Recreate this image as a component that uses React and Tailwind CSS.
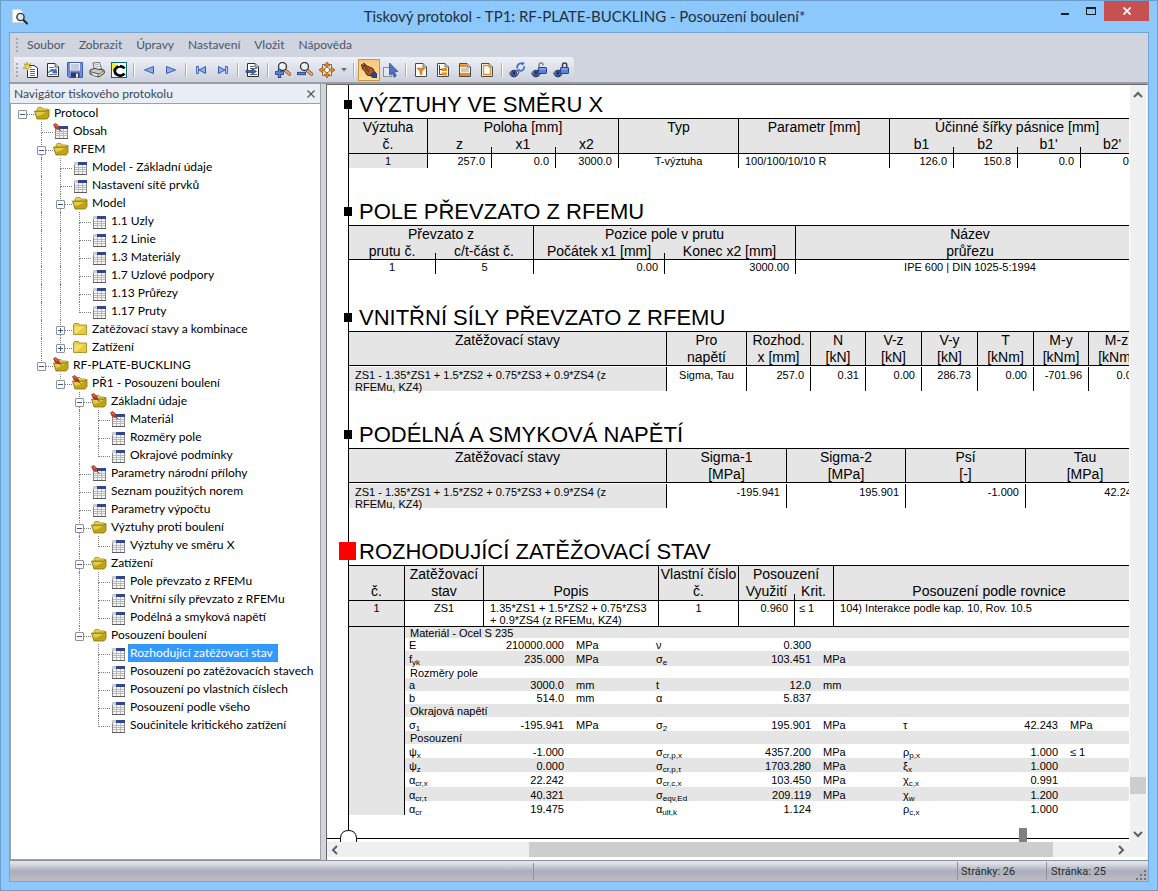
import React, { useState } from 'react';

const MENU_ITEMS = ['Soubor', 'Zobrazit', 'Úpravy', 'Nastavení', 'Vložit', 'Nápověda'];

const TREE = {
  label: 'Protocol',
  icon: 'open',
  children: [
    { label: 'Obsah', icon: 'table', pinned: true },
    {
      label: 'RFEM',
      icon: 'open',
      children: [
        { label: 'Model - Základní údaje', icon: 'table' },
        { label: 'Nastavení sítě prvků', icon: 'table' },
        {
          label: 'Model',
          icon: 'open',
          children: [
            { label: '1.1 Uzly', icon: 'table' },
            { label: '1.2 Linie', icon: 'table' },
            { label: '1.3 Materiály', icon: 'table' },
            { label: '1.7 Uzlové podpory', icon: 'table' },
            { label: '1.13 Průřezy', icon: 'table' },
            { label: '1.17 Pruty', icon: 'table' },
          ],
        },
        { label: 'Zatěžovací stavy a kombinace', icon: 'closed', collapsed: true },
        { label: 'Zatížení', icon: 'closed', collapsed: true },
      ],
    },
    {
      label: 'RF-PLATE-BUCKLING',
      icon: 'open',
      pinned: true,
      children: [
        {
          label: 'PŘ1 - Posouzení boulení',
          icon: 'open',
          pinned: true,
          children: [
            {
              label: 'Základní údaje',
              icon: 'open',
              pinned: true,
              children: [
                { label: 'Materiál', icon: 'table', pinned: true },
                { label: 'Rozměry pole', icon: 'table' },
                { label: 'Okrajové podmínky', icon: 'table' },
              ],
            },
            { label: 'Parametry národní přílohy', icon: 'table', pinned: true },
            { label: 'Seznam použitých norem', icon: 'table' },
            { label: 'Parametry výpočtu', icon: 'table' },
            {
              label: 'Výztuhy proti boulení',
              icon: 'open',
              children: [{ label: 'Výztuhy ve směru X', icon: 'table' }],
            },
            {
              label: 'Zatížení',
              icon: 'open',
              children: [
                { label: 'Pole převzato z RFEMu', icon: 'table' },
                { label: 'Vnitřní síly převzato z RFEMu', icon: 'table' },
                { label: 'Podélná a smyková napětí', icon: 'table' },
              ],
            },
            {
              label: 'Posouzení boulení',
              icon: 'open',
              children: [
                { label: 'Rozhodující zatěžovací stav', icon: 'table' },
                { label: 'Posouzení po zatěžovacích stavech', icon: 'table' },
                { label: 'Posouzení po vlastních číslech', icon: 'table' },
                { label: 'Posouzení podle všeho', icon: 'table' },
                { label: 'Součinitele kritického zatížení', icon: 'table' },
              ],
            },
          ],
        },
      ],
    },
  ],
};

/* ---------- icons ---------- */

const Svg = ({ children, className = 'size-4' }) => (
  <svg viewBox="0 0 16 16" className={`block shrink-0 ${className}`} aria-hidden="true">
    {children}
  </svg>
);

const Pin = () => (
  <g>
    <path d="M0.5 1.5 L3 0.5 L5.5 3 L7 6 L4 6.5 L2 5Z" fill="#c0392b" stroke="#7a2a20" strokeWidth="0.6" />
    <path d="M2 1.5 L4 3.5" stroke="#f2b8a8" strokeWidth="1" />
    <path d="M6 6 L8.5 8.5" stroke="#5a3a20" strokeWidth="1" />
  </g>
);

const TreeIcon = ({ type, pinned }) => (
  <Svg>
    {type === 'table' && (
      <>
        <rect x="2" y="3" width="13" height="13" fill="#8a8a8e" />
        <rect x="2" y="3" width="4" height="3" fill="#c9cbd4" />
        <rect x="6" y="3" width="9" height="3" fill="#31468c" />
        <rect x="3" y="6" width="11" height="9" fill="#f6f6f4" />
        <path d="M3 8.5H14 M3 10.5H14 M3 12.5H14 M6.5 6V15 M10.5 6V15" stroke="#b9b9bc" strokeWidth="1" />
        <path d="M2 15.5H15" stroke="#5c5c60" />
      </>
    )}
    {type === 'open' && (
      <>
        <path d="M3 4 L4 2.5 H8 L9 4 H13.5 V12 H4Z" fill="#e6cd45" stroke="#a8901c" strokeWidth="0.8" />
        <path d="M0.5 6 H12.5 L15 4.5 V11.5 L13 14 H3Z" fill="#bfa418" stroke="#857010" strokeWidth="0.8" />
        <path d="M1.5 7 H12 L7 10 L3 11Z" fill="#ecd85c" opacity="0.75" />
      </>
    )}
    {type === 'closed' && (
      <>
        <path d="M1.5 4 L2.5 2.5 H6.5 L7.5 4 H14.5 V13.5 H1.5Z" fill="#e6ca3c" stroke="#a8901c" strokeWidth="0.9" />
        <path d="M2.5 5.5 H12.5 L4.5 12.5 H2.5Z" fill="#f3e070" />
      </>
    )}
    {pinned && <Pin />}
  </Svg>
);

const Sheet = ({ stroke = '#2e2e2e' }) => (
  <>
    <path d="M2.5 1.5 H10 L13.5 5 V14.5 H2.5Z" fill="#fdfdfd" stroke={stroke} />
    <path d="M10 1.5 V5 H13.5" fill="#d8dbe2" stroke={stroke} strokeWidth="0.8" />
  </>
);

const Lens = ({ handle = '#eda67a' }) => (
  <>
    <path d="M10 8 L14.5 12" stroke="#7a4a2a" strokeWidth="3.4" strokeLinecap="round" />
    <path d="M10 8 L14.5 12" stroke={handle} strokeWidth="2" strokeLinecap="round" />
    <circle cx="7.5" cy="4.5" r="4" fill="#e9f0f8" stroke="#333" strokeWidth="1.3" />
    <path d="M5.2 4 A2.4 2.4 0 0 1 8 2" fill="none" stroke="#fff" strokeWidth="1.2" />
  </>
);

const Eye = () => (
  <>
    <path d="M0.5 11 Q5 5.5 10 10.5 Q8 15.5 4.5 15 Q1.5 14.5 0.5 11Z" fill="#c9d3ea" stroke="#2b3350" strokeWidth="1" />
    <circle cx="5" cy="11.5" r="2.7" fill="#3d62b8" stroke="#1c2850" strokeWidth="0.7" />
    <circle cx="5" cy="11.3" r="1" fill="#111" />
  </>
);

const ICONS = {
  fresh: (
    <>
      <path d="M5.5 3.5 H11 L14.5 6 V15.5 H4.5 V6Z" fill="#fff" stroke="#2e2e2e" />
      <path d="M7 7.5H12 M7 9.5H12 M7 11.5H12 M7 13.5H12" stroke="#555" strokeWidth="0.9" />
      <path d="M4 0 L5 3 L8 1.5 L6 4 L8.5 5.5 L5.5 6 L4.5 9 L3.5 6 L0 6.5 L2.5 4.5 L1 1.5 L3.5 3Z" fill="#f6dc3a" stroke="#9c8412" strokeWidth="0.6" />
    </>
  ),
  importPage: (
    <>
      <Sheet />
      <path d="M4 5.5H9 M4 12.5H12" stroke="#777" />
      <path d="M3 11 Q6 5.5 9.5 8 L11 6.5 L12 11 H7.5 L8.7 9.6 Q6 8 3 11Z" fill="#3f6fd0" stroke="#24438c" strokeWidth="0.5" />
    </>
  ),
  save: (
    <>
      <path d="M0.5 0.5 H15.5 V15.5 H2 L0.5 14Z" fill="#6f8cdc" stroke="#4560b0" />
      <rect x="3" y="1" width="10" height="7.5" fill="#eef1f8" />
      <path d="M4 3H12 M4 5H12 M4 7H12" stroke="#9aa4bf" />
      <rect x="4" y="10.5" width="8.5" height="5" fill="#2f3b62" />
      <rect x="9" y="11.5" width="2" height="4" fill="#e8e8e8" />
    </>
  ),
  print: (
    <>
      <path d="M4 1 L10.5 0.5 L12.5 7 L5.5 8Z" fill="#fff" stroke="#444" strokeWidth="0.8" />
      <path d="M5.5 3 L9.5 2.5 M6 5 L10.5 4.5" stroke="#888" strokeWidth="0.8" />
      <path d="M1 8 L5 6.5 L15 8 L15.5 11 L10 15 L1 12Z" fill="#c9c9c9" stroke="#333" strokeWidth="0.9" />
      <path d="M1 9.5 L10 12 L15 8.5" fill="none" stroke="#555" strokeWidth="0.8" />
      <path d="M3.5 10.5 L9.5 12.5 L7.5 14.5 L2.5 12.5Z" fill="#fff" stroke="#444" strokeWidth="0.6" />
      <rect x="12" y="10" width="2" height="1.2" fill="#d7c02c" />
    </>
  ),
  copy: (
    <>
      <rect x="0.5" y="0.5" width="15" height="15" fill="#fff" stroke="#0c6b6b" />
      <path d="M1 1 H9 L3 9 L1 8Z" fill="#f2ee2c" />
      <path d="M13.5 6.5 A5.3 4.6 0 1 0 13.5 11.5" fill="none" stroke="#000" strokeWidth="2.8" />
      <path d="M4 1 L8 4.5 L11 1Z" fill="#fff" />
    </>
  ),
  prev: <path d="M12.5 4.5 L3.5 8 L12.5 11.5Z" fill="#8fb0f0" stroke="#3a5bb0" />,
  next: <path d="M3.5 4.5 L12.5 8 L3.5 11.5Z" fill="#8fb0f0" stroke="#3a5bb0" />,
  first: (
    <>
      <path d="M12.5 4.5 L6 8 L12.5 11.5Z" fill="#8fb0f0" stroke="#3a5bb0" />
      <rect x="3.5" y="4.5" width="2" height="7" fill="#a9c1f2" stroke="#3a5bb0" strokeWidth="0.8" />
    </>
  ),
  last: (
    <>
      <path d="M3.5 4.5 L10 8 L3.5 11.5Z" fill="#8fb0f0" stroke="#3a5bb0" />
      <rect x="10.5" y="4.5" width="2" height="7" fill="#a9c1f2" stroke="#3a5bb0" strokeWidth="0.8" />
    </>
  ),
  goTo: (
    <>
      <Sheet />
      <path d="M5 4.5H9 M5 6.5H12 M5 12.5H12" stroke="#666" />
      <path d="M1 8.5 H7 V6.5 L11.5 9.5 L7 12 V10.5 H1Z" fill="#3f62b4" stroke="#1e3470" strokeWidth="0.7" />
    </>
  ),
  zoomIn: (
    <>
      <Lens />
      <path d="M0 11 H9 M4.5 7 V16" stroke="#20346f" strokeWidth="3.4" />
      <path d="M0.6 11 H8.4 M4.5 7.6 V15.2" stroke="#5a82dc" strokeWidth="2" />
    </>
  ),
  zoomOut: (
    <>
      <Lens />
      <path d="M0 11.5 H9" stroke="#20346f" strokeWidth="3.2" />
      <path d="M0.6 11.5 H8.4" stroke="#5a82dc" strokeWidth="1.8" />
    </>
  ),
  fit: (
    <>
      <rect x="3.5" y="2.5" width="9" height="11" fill="#fff" stroke="#777" />
      <path d="M8 0 L11 4 H5Z M8 16 L5 12 H11Z M0 8 L4 5 V11Z M16 8 L12 11 V5Z" fill="#ee8c1e" stroke="#8b4a08" strokeWidth="0.7" />
      <circle cx="8" cy="8" r="2.6" fill="#fff" stroke="#8b4a08" strokeWidth="0.9" />
      <path d="M8 4V6 M8 10V12 M4 8H6 M10 8H12" stroke="#c96a0c" strokeWidth="1.4" />
    </>
  ),
  hand: (
    <>
      <path d="M0.5 2.5 L3.5 4 L2.5 1 L6 4 L12 6.5 L14 11 L10.5 14 L6 13 L4 9.5 L1.5 7Z" fill="#a85c28" stroke="#3e1f0c" strokeWidth="0.9" />
      <path d="M3 4 L8 8 M4 6.5 L8 10" stroke="#5c2f12" strokeWidth="0.9" />
      <path d="M9.5 13 L13.5 9.5 L16 12 V16 H12Z" fill="#2b4796" stroke="#14244f" strokeWidth="0.7" />
    </>
  ),
  select: (
    <>
      <rect x="0.5" y="5.5" width="8" height="9" fill="#e6e8ee" stroke="#8b8f99" />
      <path d="M6.5 1 L15 9.5 H11.5 L13.2 14 L11 15.2 L9.3 10.8 L6.5 13Z" fill="#4f72c4" stroke="#2a4488" strokeWidth="0.7" />
    </>
  ),
  filter: (
    <>
      <Sheet stroke="#4a4a4a" />
      <path d="M4 6 H12 L9 9.5 V13 L7 12 V9.5Z" fill="#ee8c1e" stroke="#b05e0c" strokeWidth="0.5" />
    </>
  ),
  outline: (
    <>
      <Sheet stroke="#4a4a4a" />
      <path d="M4.5 3 V12.5 H7 M4.5 7.5 H7" fill="none" stroke="#333" strokeWidth="0.9" />
      <rect x="6.5" y="6" width="5.5" height="3" fill="#ee8c1e" />
      <rect x="6.5" y="10.5" width="5.5" height="3" fill="#ee8c1e" />
    </>
  ),
  header: (
    <>
      <Sheet stroke="#4a4a4a" />
      <rect x="3" y="2.2" width="6.5" height="2.8" fill="#ee8c1e" />
      <path d="M4 7H12 M4 9H12" stroke="#888" strokeWidth="0.9" />
      <rect x="3" y="10.8" width="10" height="3.2" fill="#ee8c1e" />
    </>
  ),
  frame: (
    <>
      <Sheet stroke="#4a4a4a" />
      <path d="M4.5 3.5 H9 L11.5 6 V12.5 H4.5Z" fill="#fff" stroke="#ee8c1e" strokeWidth="1.3" />
    </>
  ),
  eyeRefresh: (
    <>
      <Eye />
      <path d="M8.5 6.5 A3.6 3.6 0 0 1 14 2.2 M15 4.2 A3.6 3.6 0 0 1 9.6 8.2" fill="none" stroke="#3f6fd0" strokeWidth="1.7" />
      <path d="M12.5 0 L15.8 0.8 L13.6 3.8Z M8.5 9.8 L8.3 6.4 L11.4 8Z" fill="#3f6fd0" />
    </>
  ),
  eyeUnlock: (
    <>
      <Eye />
      <path d="M8 5 V2.8 A2 2 0 0 1 12 2.8 V3.5" fill="none" stroke="#6b6f78" strokeWidth="1.3" />
      <rect x="7.5" y="5.5" width="8" height="6" rx="0.6" fill="#5b80d8" stroke="#24438c" />
      <path d="M8.5 7H14.5" stroke="#a9bff0" />
    </>
  ),
  eyeLock: (
    <>
      <Eye />
      <path d="M9.5 5.5 V3 A2 2 0 0 1 13.7 3 V5.5" fill="none" stroke="#3a3d45" strokeWidth="1.5" />
      <rect x="7.5" y="5.5" width="8" height="6" rx="0.6" fill="#5b80d8" stroke="#24438c" />
      <path d="M8.5 7H14.5" stroke="#a9bff0" />
    </>
  ),
};

const TOOLBAR = [
  ['fresh', 'importPage', 'save', 'print', 'copy'],
  ['prev', 'next'],
  ['first', 'last'],
  ['goTo'],
  ['zoomIn', 'zoomOut', 'fit', 'dropdown'],
  ['hand', 'select'],
  ['filter', 'outline', 'header', 'frame'],
  ['eyeRefresh', 'eyeUnlock', 'eyeLock'],
];

const Chevron = ({ d, className = 'size-4' }) => (
  <svg viewBox="0 0 16 16" className={`block ${className}`} aria-hidden="true">
    <path d={d} fill="none" stroke="#606060" strokeWidth="2" />
  </svg>
);

/* ---------- window chrome ---------- */

const TitleBar = () => (
  <header className="grid h-[31px] grid-cols-[1fr_auto_1fr] items-start pl-[11px]">
    <svg viewBox="0 0 16 16" className="mt-2 size-4" aria-hidden="true">
      <path d="M0.5 0.5 H8 L11 3 V13.5 H0.5Z" fill="#fdfdfd" stroke="#c9d3de" strokeWidth="0.7" />
      <path d="M11.5 11 L15 14.5" stroke="#222" strokeWidth="2" strokeLinecap="round" />
      <circle cx="8.5" cy="8" r="3.6" fill="#dfe7ef" stroke="#333" strokeWidth="1.4" />
    </svg>
    <h1 className="text-[15px] leading-[31px] whitespace-nowrap text-[#1f2f40]">
      Tiskový protokol - TP1: RF-PLATE-BUCKLING - Posouzení boulení*
    </h1>
    <div className="mr-2 flex h-5 justify-self-end">
      <button aria-label="Minimalizovat" className="flex w-[27px] items-center justify-center pt-1.5">
        <span className="h-0.5 w-2 bg-[#1c1c1c]" />
      </button>
      <button aria-label="Maximalizovat" className="flex w-[26px] items-center justify-center">
        <span className="h-2 w-2.5 border border-t-2 border-[#1c1c1c]" />
      </button>
      <button aria-label="Zavřít" className="flex w-[45px] items-center justify-center bg-[#c75050]">
        <svg viewBox="0 0 8 8" className="size-2" aria-hidden="true">
          <path d="M0.5 0.5 L7.5 7.5 M7.5 0.5 L0.5 7.5" stroke="#fff" strokeWidth="1.7" />
        </svg>
      </button>
    </div>
  </header>
);

const Grip = () => (
  <span className="flex flex-col gap-0.5 px-0.5">
    <span className="size-0.5 bg-[#a3a8b5]" />
    <span className="size-0.5 bg-[#a3a8b5]" />
    <span className="size-0.5 bg-[#a3a8b5]" />
    <span className="size-0.5 bg-[#a3a8b5]" />
  </span>
);

const MenuBar = () => (
  <nav className="flex h-6 items-center bg-[#cfd4de] pl-1">
    <Grip />
    {MENU_ITEMS.map((item) => (
      <button key={item} className="px-[7px] text-xs text-[#4b5567]">
        {item}
      </button>
    ))}
  </nav>
);

const Toolbar = () => (
  <div className="flex border-b-2 border-[#9b9da6] bg-[#cfd4de] pl-1">
    <div className="flex h-[25px] items-center rounded-r bg-linear-to-b from-[#eef0f7] to-[#cbd0dc] pr-0.5">
      <Grip />
      {TOOLBAR.map((group, index) => (
        <div key={group[0]} className="flex items-center">
          {index > 0 && <span className="mx-[3px] h-3.5 w-0.5 border-l border-[#a9aebb] bg-white" />}
          {group.map((name) =>
            name === 'dropdown' ? (
              <button key={name} aria-label={name} className="flex w-3 justify-center">
                <svg viewBox="0 0 6 4" className="h-1 w-1.5" aria-hidden="true">
                  <path d="M0 0H6L3 3.5Z" fill="#6b6f7a" />
                </svg>
              </button>
            ) : (
              <button
                key={name}
                aria-label={name}
                className={`flex size-[22px] items-center justify-center ${
                  name === 'hand' ? 'border border-[#c99645] bg-linear-to-b from-[#f7c684] to-[#ffdf93]' : ''
                }`}
              >
                <Svg>{ICONS[name]}</Svg>
              </button>
            )
          )}
        </div>
      ))}
    </div>
  </div>
);

/* ---------- navigator ---------- */

const GuideCell = ({ through }) => (
  <span className="flex h-full w-[19px] shrink-0 pl-[9px]">
    {through && <span className="h-full border-l border-dotted border-[#7d7d7d]" />}
  </span>
);

const BranchCell = ({ isRoot, isLast, node }) => (
  <span className="relative flex h-full w-[21px] shrink-0 flex-col pl-[9px]">
    <span className={`h-[11px] border-b border-dotted border-[#7d7d7d] ${isRoot ? '' : 'border-l'}`} />
    {!isLast && !isRoot && <span className="flex-1 border-l border-dotted border-[#7d7d7d]" />}
    {(node.children || node.collapsed) && (
      <span className="absolute top-1.5 left-[5px] flex size-[9px] items-center justify-center rounded-[1px] border border-[#8c919c] bg-white">
        <span className="h-px w-[5px] bg-[#3b55a0]" />
        {node.collapsed && <span className="absolute h-[5px] w-px bg-[#3b55a0]" />}
      </span>
    )}
  </span>
);

const TreeNode = ({ node, guides = [], isRoot = false, isLast = true, selected, onSelect }) => {
  const isSelected = selected === node.label;
  const childGuides = isRoot ? [false] : [...guides, !isLast];

  return (
    <li>
      <div className="flex h-[18px] items-center">
        {guides.map((through, index) => (
          <GuideCell key={index} through={through} />
        ))}
        <BranchCell isRoot={isRoot} isLast={isLast} node={node} />
        <TreeIcon type={node.icon} pinned={node.pinned} />
        <button
          onClick={() => onSelect(node.label)}
          className={`ml-0.5 h-[18px] border border-dotted pr-1 pl-px text-xs leading-4 whitespace-nowrap ${
            isSelected ? 'border-[#c8691e] bg-[#3399ff] text-white' : 'border-transparent text-black'
          }`}
        >
          {node.label}
        </button>
      </div>
      {node.children && (
        <ul>
          {node.children.map((child, index) => (
            <TreeNode
              key={child.label}
              node={child}
              guides={childGuides}
              isLast={index === node.children.length - 1}
              selected={selected}
              onSelect={onSelect}
            />
          ))}
        </ul>
      )}
    </li>
  );
};

const Navigator = () => {
  const [selected, setSelected] = useState('Rozhodující zatěžovací stav');

  return (
    <aside className="flex w-[311px] shrink-0 flex-col border-r border-b border-[#a0a0a0]">
      <div className="flex h-5 items-center justify-between border-b border-[#a0a0a0] bg-[#e9edf5] pr-[5px] pl-1">
        <h2 className="text-xs text-[#3c4659]">Navigátor tiskového protokolu</h2>
        <button aria-label="Zavřít navigátor">
          <svg viewBox="0 0 8 8" className="size-2" aria-hidden="true">
            <path d="M0.5 0.5 L7.5 7.5 M7.5 0.5 L0.5 7.5" stroke="#555" strokeWidth="1.2" />
          </svg>
        </button>
      </div>
      <ul className="flex-1 border-l border-[#a0a0a0] bg-white pl-0.5">
        <TreeNode node={TREE} isRoot selected={selected} onSelect={setSelected} />
      </ul>
    </aside>
  );
};

/* ---------- report ---------- */

// short divider tick rising from the bottom edge of a header cell
const TICK = 'bg-[linear-gradient(#000,#000)] bg-[length:1px_6px] bg-[position:left_bottom] bg-no-repeat';

const Th = ({ className = '', ...props }) => (
  <th className={`p-0 text-center align-top text-sm leading-4 font-normal whitespace-nowrap ${className}`} {...props} />
);

const Td = ({ className = '', first = false, pad = 'pt-px', ...props }) => (
  <td className={`p-0 ${pad} align-top ${first ? '' : 'border-l border-black'} ${className}`} {...props} />
);

const Section = ({ title, active = false, first = false, children }) => (
  <section className={first ? 'pt-[5px]' : 'pt-[29px]'}>
    <h2 className="relative flex h-7 items-center pl-2.5 text-[22px] whitespace-nowrap">
      <span
        className={
          active ? 'absolute top-[5px] -left-[10px] h-[18px] w-[17px] bg-[#ff0000]' : 'absolute top-[10px] -left-[5px] h-[9px] w-2 bg-black'
        }
      />
      {title}
    </h2>
    {children}
  </section>
);

const ReportTable = ({ widths, head, children }) => (
  <table className="w-full table-fixed border-separate border-spacing-0 border-t border-black text-[11px] leading-3">
    <colgroup>
      {widths.map((width, index) => (
        <col key={index} style={{ width }} />
      ))}
    </colgroup>
    {head && <thead className="bg-[#e5e5e5]">{head}</thead>}
    <tbody>{children}</tbody>
  </table>
);

const Gap = ({ span }) => (
  <tr className="h-px">
    <td colSpan={span} className="p-0" />
  </tr>
);

const StiffenersTable = () => (
  <ReportTable
    widths={[78, 64, 64, 63, 120, 151, 64, 64, 63, 64]}
    head={
      <>
        <tr className="h-[17px]">
          <Th>Výztuha</Th>
          <Th colSpan={3} className="border-l">Poloha [mm]</Th>
          <Th className="border-l">Typ</Th>
          <Th className="border-l">Parametr [mm]</Th>
          <Th colSpan={4} className="border-l">Účinné šířky pásnice [mm]</Th>
        </tr>
        <tr className="h-[18px]">
          <Th className="border-b">č.</Th>
          <Th className="border-b border-l">z</Th>
          <Th className={`border-b ${TICK}`}>x1</Th>
          <Th className={`border-b ${TICK}`}>x2</Th>
          <Th className="border-b border-l" />
          <Th className="border-b border-l" />
          <Th className="border-b border-l">b1</Th>
          <Th className={`border-b ${TICK}`}>b2</Th>
          <Th className={`border-b ${TICK}`}>b1'</Th>
          <Th className={`border-b ${TICK}`}>b2'</Th>
        </tr>
      </>
    }
  >
    <tr className="h-3.5">
      <Td first className="bg-[#e5e5e5] text-center">1</Td>
      <Td className="pr-1.5 text-right">257.0</Td>
      <Td className="pr-1.5 text-right">0.0</Td>
      <Td className="pr-1.5 text-right">3000.0</Td>
      <Td className="text-center">T-výztuha</Td>
      <Td className="pl-1.5">100/100/10/10 R</Td>
      <Td className="pr-1.5 text-right">126.0</Td>
      <Td className="pr-1.5 text-right">150.8</Td>
      <Td className="pr-1.5 text-right">0.0</Td>
      <Td className="pr-1.5 text-right">0.0</Td>
    </tr>
  </ReportTable>
);

const PanelTable = () => (
  <ReportTable
    widths={[86, 98, 131, 131, 349]}
    head={
      <>
        <tr className="h-[17px]">
          <Th colSpan={2}>Převzato z</Th>
          <Th colSpan={2} className="border-l">Pozice pole v prutu</Th>
          <Th className="border-l">Název</Th>
        </tr>
        <tr className="h-[17px]">
          <Th className="border-b">prutu č.</Th>
          <Th className={`border-b ${TICK}`}>c/t-část č.</Th>
          <Th className="border-b border-l">Počátek x1 [mm]</Th>
          <Th className={`border-b ${TICK}`}>Konec x2 [mm]</Th>
          <Th className="border-b border-l">průřezu</Th>
        </tr>
      </>
    }
  >
    <tr className="h-3.5">
      <Td first className="text-center">1</Td>
      <Td className="text-center">5</Td>
      <Td className="pr-1.5 text-right">0.00</Td>
      <Td className="pr-1.5 text-right">3000.00</Td>
      <Td className="text-center">IPE 600 | DIN 1025-5:1994</Td>
    </tr>
  </ReportTable>
);

const LOAD_CASE = ['ZS1 - 1.35*ZS1 + 1.5*ZS2 + 0.75*ZS3 + 0.9*ZS4 (z', 'RFEMu, KZ4)'];

const LoadCaseTable = ({ widths, columns, units, textCell, values }) => (
  <ReportTable
    widths={widths}
    head={
      <>
        <tr className="h-[17px]">
          <Th>Zatěžovací stavy</Th>
          {columns.map((name) => (
            <Th key={name} className="border-l">{name}</Th>
          ))}
        </tr>
        <tr className="h-[17px]">
          <Th className="border-b" />
          {units.map((unit, index) => (
            <Th key={index} className="border-b border-l">{unit}</Th>
          ))}
        </tr>
      </>
    }
  >
    <Gap span={widths.length} />
    <tr className="h-6">
      <Td first pad="pt-0.5" className="bg-[#e5e5e5] pl-1.5">
        <div className="h-[22px] whitespace-nowrap">
          {LOAD_CASE[0]}
          <br />
          {LOAD_CASE[1]}
        </div>
      </Td>
      {textCell && <Td pad="pt-0.5" className="text-center">{textCell}</Td>}
      {values.map((value, index) => (
        <Td key={index} pad="pt-0.5" className="pr-1.5 text-right">{value}</Td>
      ))}
    </tr>
  </ReportTable>
);

const DecisiveTable = () => (
  <ReportTable
    widths={[55, 79, 175, 80, 56, 39, 311]}
    head={
      <>
        <tr className="h-[17px]">
          <Th />
          <Th className="border-l">Zatěžovací</Th>
          <Th className="border-l" />
          <Th className="border-l">Vlastní číslo</Th>
          <Th colSpan={2} className="border-l">Posouzení</Th>
          <Th className="border-l" />
        </tr>
        <tr className="h-[18px]">
          <Th className="border-b">č.</Th>
          <Th className="border-b border-l">stav</Th>
          <Th className="border-b border-l">Popis</Th>
          <Th className="border-b border-l">č.</Th>
          <Th className="border-b border-l">Využití</Th>
          <Th className={`border-b ${TICK}`}>Krit.</Th>
          <Th className="border-b border-l">Posouzení podle rovnice</Th>
        </tr>
      </>
    }
  >
    <tr className="h-[25px]">
      <Td first className="bg-[#e5e5e5] text-center">1</Td>
      <Td className="text-center">ZS1</Td>
      <Td className="pl-1.5 whitespace-nowrap">
        1.35*ZS1 + 1.5*ZS2 + 0.75*ZS3
        <br />+ 0.9*ZS4 (z RFEMu, KZ4)
      </Td>
      <Td className="text-center">1</Td>
      <Td className="pr-1.5 text-right">0.960</Td>
      <Td className="pl-1">≤ 1</Td>
      <Td className="pl-1.5">104) Interakce podle kap. 10, Rov. 10.5</Td>
    </tr>
  </ReportTable>
);

// each quantity: [symbol, subscript, value, unit]
const DETAILS = [
  { height: 'h-[11px]', title: 'Materiál - Ocel S 235' },
  { height: 'h-[13px]', items: [['E', '', '210000.000', 'MPa'], ['ν', '', '0.300', '']] },
  { height: 'h-[15px]', items: [['f', 'yk', '235.000', 'MPa'], ['σ', 'e', '103.451', 'MPa']] },
  { height: 'h-3', title: 'Rozměry pole' },
  { height: 'h-[13px]', items: [['a', '', '3000.0', 'mm'], ['t', '', '12.0', 'mm']] },
  { height: 'h-[13px]', items: [['b', '', '514.0', 'mm'], ['α', '', '5.837', '']] },
  { height: 'h-[13px]', title: 'Okrajová napětí' },
  { height: 'h-3.5', items: [['σ', '1', '-195.941', 'MPa'], ['σ', '2', '195.901', 'MPa'], ['τ', '', '42.243', 'MPa']] },
  { height: 'h-[13px]', title: 'Posouzení' },
  { height: 'h-3.5', items: [['ψ', 'x', '-1.000', ''], ['σ', 'cr,p,x', '4357.200', 'MPa'], ['ρ', 'p,x', '1.000', '≤ 1']] },
  { height: 'h-3.5', items: [['ψ', 'z', '0.000', ''], ['σ', 'cr,p,τ', '1703.280', 'MPa'], ['ξ', 'x', '1.000', '']] },
  { height: 'h-[15px]', items: [['α', 'cr,x', '22.242', ''], ['σ', 'cr,c,x', '103.450', 'MPa'], ['χ', 'c,x', '0.991', '']] },
  { height: 'h-3.5', items: [['α', 'cr,τ', '40.321', ''], ['σ', 'eqv,Ed', '209.119', 'MPa'], ['χ', 'w', '1.200', '']] },
  { height: 'h-3.5', items: [['α', 'cr', '19.475', ''], ['α', 'ult,k', '1.124', ''], ['ρ', 'c,x', '1.000', '']] },
];

const DetailRow = ({ row, striped, lead }) => {
  const cells = row.items ? [0, 1, 2].map((index) => row.items[index] || ['', '', '', '']) : [];

  return (
    <tr className={`${row.height} ${striped ? 'bg-[#e5e5e5]' : ''}`}>
      {lead}
      {row.title && <td colSpan={9} className="p-0 pt-0.5 pl-[5px]">{row.title}</td>}
      {cells.map(([symbol, sub, value, unit], index) => (
        <React.Fragment key={index}>
          <td className="p-0 pt-0.5 pl-1 whitespace-nowrap">
            {symbol}
            {sub && <sub className="text-[8px]">{sub}</sub>}
          </td>
          <td className="p-0 pt-0.5 text-right">{value}</td>
          <td className="p-0 pt-0.5 pl-3">{unit}</td>
        </React.Fragment>
      ))}
    </tr>
  );
};

const DetailsTable = () => (
  <table className="w-full table-fixed border-separate border-spacing-0 border-t border-black text-[11px] leading-[9px]">
    <colgroup>
      {[56, 76, 83, 88, 76, 83, 88, 76, 83, 86].map((width, index) => (
        <col key={index} style={{ width }} />
      ))}
    </colgroup>
    <tbody>
      {DETAILS.map((row, index) => (
        <DetailRow
          key={index}
          row={row}
          striped={index % 2 === 0}
          lead={index === 0 && <td rowSpan={DETAILS.length} className="border-r border-black bg-[#e5e5e5] p-0" />}
        />
      ))}
    </tbody>
  </table>
);

const Report = () => (
  <div className="relative flex min-w-0 flex-1 flex-col overflow-hidden bg-white pb-[3px] font-['Liberation_Sans',Arial,sans-serif] text-black">
    <div className="flex flex-1 border-b border-black pl-[21px]">
      <div className="w-[796px] shrink-0 border-l border-black">
        <Section title="VÝZTUHY VE SMĚRU X" first>
          <StiffenersTable />
        </Section>
        <Section title="POLE PŘEVZATO Z RFEMU">
          <PanelTable />
        </Section>
        <Section title="VNITŘNÍ SÍLY PŘEVZATO Z RFEMU">
          <LoadCaseTable
            widths={[317, 80, 64, 55, 56, 56, 56, 55, 56]}
            columns={['Pro', 'Rozhod.', 'N', 'V-z', 'V-y', 'T', 'M-y', 'M-z']}
            units={['napětí', 'x [mm]', '[kN]', '[kN]', '[kN]', '[kNm]', '[kNm]', '[kNm]']}
            textCell="Sigma, Tau"
            values={['257.0', '0.31', '0.00', '286.73', '0.00', '-701.96', '0.00']}
          />
        </Section>
        <Section title="PODÉLNÁ A SMYKOVÁ NAPĚTÍ">
          <LoadCaseTable
            widths={[317, 120, 119, 120, 119]}
            columns={['Sigma-1', 'Sigma-2', 'Psí', 'Tau']}
            units={['[MPa]', '[MPa]', '[-]', '[MPa]']}
            values={['-195.941', '195.901', '-1.000', '42.243']}
          />
        </Section>
        <Section title="ROZHODUJÍCÍ ZATĚŽOVACÍ STAV" active>
          <DecisiveTable />
          <DetailsTable />
        </Section>
      </div>
    </div>
    {/* page break handle and right margin marker */}
    <svg viewBox="0 0 17 12" className="absolute bottom-0 left-[13px] h-3 w-[17px]" aria-hidden="true">
      <path d="M0.5 12 V8 Q1 0.5 8.5 0.5 Q16 0.5 16.5 8 V12" fill="#fff" stroke="#000" />
    </svg>
    <span className="absolute right-[102px] bottom-0 h-3.5 w-2 bg-[#808080]" />
  </div>
);

const Preview = () => (
  <main className="ml-[5px] flex min-w-0 flex-1 flex-col border-t border-r border-l border-[#696969] border-r-[#e8e8e8] bg-white pr-px">
    <div className="flex flex-1">
      <Report />
      <div className="flex w-[17px] flex-col items-center justify-between border-l border-white bg-[#f0f0f0] pt-0.5">
        <Chevron d="M4 10 L8 6 L12 10" />
        <div className="flex flex-1 flex-col justify-end self-stretch pb-8">
          <div className="h-[17px] bg-[#cdcdcd]" />
        </div>
        <Chevron d="M4 6 L8 10 L12 6" />
      </div>
    </div>
    <div className="flex h-[15px] bg-[#f0f0f0] pr-[17px]">
      <Chevron d="M10 4 L6 8 L10 12" />
      <div className="flex flex-1 justify-end pr-[60px]">
        <div className="w-[524px] bg-[#cdcdcd]" />
      </div>
      <Chevron d="M6 4 L10 8 L6 12" />
    </div>
    <div className="h-[3px]" />
  </main>
);

const StatusBar = () => (
  <footer className="flex h-[21px] items-center border-t border-[#8f929b] bg-linear-to-b from-[#dfe2e8] from-10% via-[#aaafba] via-50% to-[#bcbcc4] font-[Roboto,sans-serif] text-[11px] text-[#2b2b2b]">
    <div className="h-[17px] w-[524px] border-r border-[#8f929b]" />
    <div className="h-[17px] flex-1" />
    <div className="h-[18px] w-[89px] border-l border-[#8f929b] pl-[3px] leading-[19px]">Stránky: 26</div>
    <div className="h-[18px] w-[90px] border-l border-[#8f929b] pl-1 leading-[19px]">Stránka: 25</div>
    <svg viewBox="0 0 11 11" className="mr-px size-[11px] self-end" aria-hidden="true">
      <path d="M8 0h2v2h-2z M8 4h2v2h-2z M4 4h2v2h-2z M8 8h2v2h-2z M4 8h2v2h-2z M0 8h2v2h-2z" fill="#6f727b" />
    </svg>
  </footer>
);

const App = () => (
  <div className="flex min-h-screen flex-col border border-[#6b9ccb] bg-[#8cc8fb] font-[Lato,'Open_Sans',sans-serif]">
    <TitleBar />
    <div className="mx-2 mb-2 flex flex-1 flex-col border border-[#73a5d4]">
      <MenuBar />
      <Toolbar />
      <div className="flex flex-1 bg-[#cfd4de]">
        <Navigator />
        <Preview />
      </div>
      <StatusBar />
    </div>
  </div>
);

export default App;
